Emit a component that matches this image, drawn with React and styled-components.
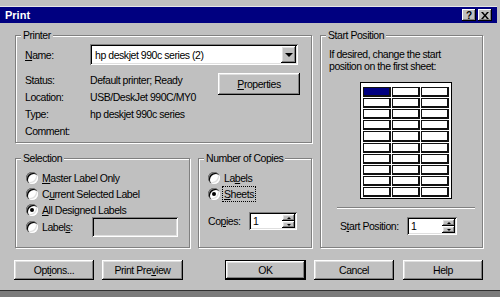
import styled, { createGlobalStyle, css } from "styled-components";

const GlobalStyle = createGlobalStyle`
  html, body {
    margin: 0;
    padding: 0;
  }
  body {
    width: 500px;
    height: 297px;
    overflow: hidden;
    background: #7b7b7b;
    font-family: "Liberation Sans", Arial, sans-serif;
    font-size: 10.5px;
    letter-spacing: -0.45px;
    color: #000;
  }
`;

const Window = styled.div`
  width: 500px;
  height: 291px;
  box-sizing: border-box;
  background: #c0c0c0;
  padding: 6px 3px 0 0;
  border-bottom: 1px solid #303030;
`;

const TitleBar = styled.div`
  height: 16px;
  border-top: 1px solid #e6e6e6;
  background: #000080;
  color: #fff;
  display: flex;
  align-items: center;
  padding: 0 5px;
  font-weight: bold;
  font-size: 11px;
  letter-spacing: 0;
`;

const TitleButtons = styled.div`
  margin-left: auto;
  display: flex;
  gap: 2px;
`;

const TitleButton = styled.div`
  width: 14px;
  height: 12px;
  background: #c0c0c0;
  color: #000;
  display: flex;
  align-items: center;
  justify-content: center;
  font-size: 10px;
  font-weight: bold;
  box-shadow: inset -1px -1px 0 #000, inset 1px 1px 0 #fff,
    inset -2px -2px 0 #808080;
`;

const Body = styled.div`
  padding: 12px 14px 0 15px;
`;

const Main = styled.div`
  display: flex;
  gap: 8px;
`;

const LeftColumn = styled.div`
  width: 297px;
  display: flex;
  flex-direction: column;
  gap: 15px;
`;

const GroupRow = styled.div`
  display: flex;
  gap: 8px;
`;

const GroupBox = styled.div`
  position: relative;
  box-sizing: border-box;
  width: ${(p) => p.$w}px;
  height: ${(p) => p.$h}px;
  border: 1px solid #808080;
  box-shadow: inset 1px 1px 0 #fff, 1px 1px 0 #fff;
  padding: ${(p) => p.$pad};
`;

const Legend = styled.span`
  position: absolute;
  top: -7px;
  left: 5px;
  padding: 0 2px;
  line-height: 13px;
  background: #c0c0c0;
`;

const Key = styled.span`
  text-decoration: underline;
`;

const NameRow = styled.div`
  display: flex;
  align-items: center;
  height: 21px;
`;

const FieldLabel = styled.span`
  width: ${(p) => p.$w}px;
  flex: none;
`;

const sunken = css`
  background: #fff;
  box-shadow: inset 1px 1px 0 #808080, inset -1px -1px 0 #fff,
    inset 2px 2px 0 #000, inset -2px -2px 0 #dfdfdf;
`;

const raised = css`
  background: #c0c0c0;
  box-shadow: inset -1px -1px 0 #000, inset 1px 1px 0 #fff,
    inset -2px -2px 0 #808080, inset 2px 2px 0 #dfdfdf;
`;

const Combo = styled.div`
  ${sunken};
  flex: 1;
  height: 21px;
  margin-right: 1px;
  display: flex;
  align-items: center;
  padding: 2px 2px 2px 5px;
  box-sizing: border-box;
`;

const ComboText = styled.span`
  flex: 1;
`;

const DropButton = styled.div`
  ${raised};
  width: 15px;
  height: 17px;
  display: flex;
  align-items: center;
  justify-content: center;
`;

const ArrowDown = styled.span`
  width: 0;
  height: 0;
  border-left: ${(p) => p.$s}px solid transparent;
  border-right: ${(p) => p.$s}px solid transparent;
  border-top: ${(p) => p.$s}px solid #000;
`;

const ArrowUp = styled.span`
  width: 0;
  height: 0;
  border-left: ${(p) => p.$s}px solid transparent;
  border-right: ${(p) => p.$s}px solid transparent;
  border-bottom: ${(p) => p.$s}px solid #000;
`;

const InfoArea = styled.div`
  display: flex;
  align-items: flex-start;
  margin-top: 6px;
`;

const InfoGrid = styled.div`
  display: grid;
  grid-template-columns: 65px auto;
  grid-auto-rows: 17px;
  align-items: center;
`;

const Button = styled.div`
  ${raised};
  box-sizing: border-box;
  width: ${(p) => p.$w}px;
  height: ${(p) => p.$h || 20}px;
  margin-left: ${(p) => (p.$ml === "auto" ? "auto" : `${p.$ml || 0}px`)};
  display: flex;
  align-items: center;
  justify-content: center;
  ${(p) =>
    p.$default &&
    css`
      border: 1px solid #000;
    `}
`;

const PropertiesButton = styled(Button)`
  margin: 2px -1px 0 auto;
`;

const RadioRow = styled.div`
  display: flex;
  align-items: center;
  gap: 4px;
  height: ${(p) => p.$h || 16}px;
  margin-top: ${(p) => p.$mt || 0}px;
`;

const Radio = styled.span`
  position: relative;
  flex: none;
  width: 12px;
  height: 12px;
  border-radius: 50%;
  background: #fff;
  box-shadow: inset 1px 1px 0 #808080, inset 2px 2px 0 #000,
    inset -1px -1px 0 #fff, inset -2px -2px 0 #dfdfdf;
  ${(p) =>
    p.$checked &&
    css`
      &::after {
        content: "";
        position: absolute;
        left: 4px;
        top: 4px;
        width: 4px;
        height: 4px;
        border-radius: 50%;
        background: #000;
      }
    `}
`;

const Focus = styled.span`
  outline: 1px dotted #000;
  outline-offset: 1px;
`;

const TextBox = styled.div`
  ${sunken};
  width: ${(p) => p.$w}px;
  height: 20px;
  background: #c0c0c0;
`;

const SpinRow = styled.div`
  display: flex;
  align-items: center;
  height: 18px;
  margin-top: ${(p) => p.$mt}px;
  padding-left: ${(p) => p.$pl || 0}px;
`;

const SpinBox = styled.div`
  ${sunken};
  box-sizing: border-box;
  width: ${(p) => p.$w}px;
  height: 18px;
  display: flex;
  align-items: center;
  padding: 2px 2px 2px 4px;
`;

const SpinValue = styled.span`
  flex: 1;
`;

const Spinner = styled.div`
  display: flex;
  flex-direction: column;
  width: 13px;
  height: 14px;
`;

const SpinButton = styled.div`
  ${raised};
  flex: 1;
  display: flex;
  align-items: center;
  justify-content: center;
`;

const Hint = styled.p`
  margin: 0;
  line-height: 12px;
`;

const Sheet = styled.div`
  box-sizing: border-box;
  width: 92px;
  height: 117px;
  margin: 10px auto 0;
  background: #fff;
  border: 1px solid #000;
  padding: 4px 2px 1px;
  display: grid;
  grid-template-columns: repeat(3, 1fr);
  grid-template-rows: repeat(10, 1fr);
  gap: 1px;
`;

const Cell = styled.div`
  border: 1px solid #111;
  border-right-width: 2px;
  border-bottom-width: 2px;
  background: ${(p) => (p.$selected ? "#000080" : "#fff")};
`;

const Separator = styled.div`
  height: 0;
  margin: 8px 7px 0 8px;
  border-top: 1px solid #808080;
  border-bottom: 1px solid #fff;
`;

const ButtonRow = styled.div`
  display: flex;
  margin-top: 12px;
`;

const X = () => (
  <svg width="8" height="7" viewBox="0 0 8 7">
    <path d="M0 0h2l2 2.5L6 0h2L5 3.5 8 7H6L4 4.5 2 7H0l3-3.5z" fill="#000" />
  </svg>
);

const Spin = ({ w }) => (
  <SpinBox $w={w}>
    <SpinValue>1</SpinValue>
    <Spinner>
      <SpinButton>
        <ArrowUp $s={2} />
      </SpinButton>
      <SpinButton>
        <ArrowDown $s={2} />
      </SpinButton>
    </Spinner>
  </SpinBox>
);

export default function App() {
  const cells = Array.from({ length: 30 }, (_, i) => i);

  return (
    <>
      <GlobalStyle />
      <Window>
        <TitleBar>
          Print
          <TitleButtons>
            <TitleButton>?</TitleButton>
            <TitleButton>
              <X />
            </TitleButton>
          </TitleButtons>
        </TitleBar>
        <Body>
          <Main>
            <LeftColumn>
              <GroupBox $w={297} $h={108} $pad="8px 12px 0 9px">
                <Legend>Printer</Legend>
                <NameRow>
                  <FieldLabel $w={65}>
                    <Key>N</Key>ame:
                  </FieldLabel>
                  <Combo>
                    <ComboText>hp deskjet 990c series (2)</ComboText>
                    <DropButton>
                      <ArrowDown $s={4} />
                    </DropButton>
                  </Combo>
                </NameRow>
                <InfoArea>
                  <InfoGrid>
                    <span>Status:</span>
                    <span>Default printer; Ready</span>
                    <span>Location:</span>
                    <span>USB/DeskJet 990C/MY0</span>
                    <span>Type:</span>
                    <span>hp deskjet 990c series</span>
                    <span>Comment:</span>
                    <span />
                  </InfoGrid>
                  <PropertiesButton $w={82} $h={22}>
                    <span>
                      <Key>P</Key>roperties
                    </span>
                  </PropertiesButton>
                </InfoArea>
              </GroupBox>
              <GroupRow>
                <GroupBox $w={175} $h={90} $pad="11px 0 0 10px">
                  <Legend>Selection</Legend>
                  <RadioRow>
                    <Radio />
                    <span>
                      <Key>M</Key>aster Label Only
                    </span>
                  </RadioRow>
                  <RadioRow>
                    <Radio />
                    <span>
                      C<Key>u</Key>rrent Selected Label
                    </span>
                  </RadioRow>
                  <RadioRow>
                    <Radio $checked />
                    <span>
                      <Key>A</Key>ll Designed Labels
                    </span>
                  </RadioRow>
                  <RadioRow $h={20} $mt={-1}>
                    <Radio />
                    <FieldLabel $w={46}>
                      Label<Key>s</Key>:
                    </FieldLabel>
                    <TextBox $w={86} />
                  </RadioRow>
                </GroupBox>
                <GroupBox $w={114} $h={90} $pad="11px 0 0 9px">
                  <Legend>Number of Copies</Legend>
                  <RadioRow>
                    <Radio />
                    <span>
                      La<Key>b</Key>els
                    </span>
                  </RadioRow>
                  <RadioRow>
                    <Radio $checked />
                    <Focus>
                      <Key>S</Key>heets
                    </Focus>
                  </RadioRow>
                  <SpinRow $mt={10}>
                    <FieldLabel $w={41}>
                      Co<Key>p</Key>ies:
                    </FieldLabel>
                    <Spin w={48} />
                  </SpinRow>
                </GroupBox>
              </GroupRow>
            </LeftColumn>
            <GroupBox $w={166} $h={213} $pad="12px 0 0 8px">
              <Legend>Start Position</Legend>
              <Hint>
                If desired, change the start
                <br />
                position on the first sheet:
              </Hint>
              <Sheet>
                {cells.map((i) => (
                  <Cell key={i} $selected={i === 0} />
                ))}
              </Sheet>
              <Separator />
              <SpinRow $mt={8} $pl={11}>
                <FieldLabel $w={67}>
                  S<Key>t</Key>art Position:
                </FieldLabel>
                <Spin w={50} />
              </SpinRow>
            </GroupBox>
          </Main>
          <ButtonRow>
            <Button $w={80} $ml={-1}>
              <span>
                Opt<Key>i</Key>ons...
              </span>
            </Button>
            <Button $w={81} $ml={8}>
              <span>
                Print Pre<Key>v</Key>iew
              </span>
            </Button>
            <Button $w={81} $ml="auto" $default>
              OK
            </Button>
            <Button $w={80} $ml={8}>
              Cancel
            </Button>
            <Button $w={80} $ml={9}>
              Help
            </Button>
          </ButtonRow>
        </Body>
      </Window>
    </>
  );
}
